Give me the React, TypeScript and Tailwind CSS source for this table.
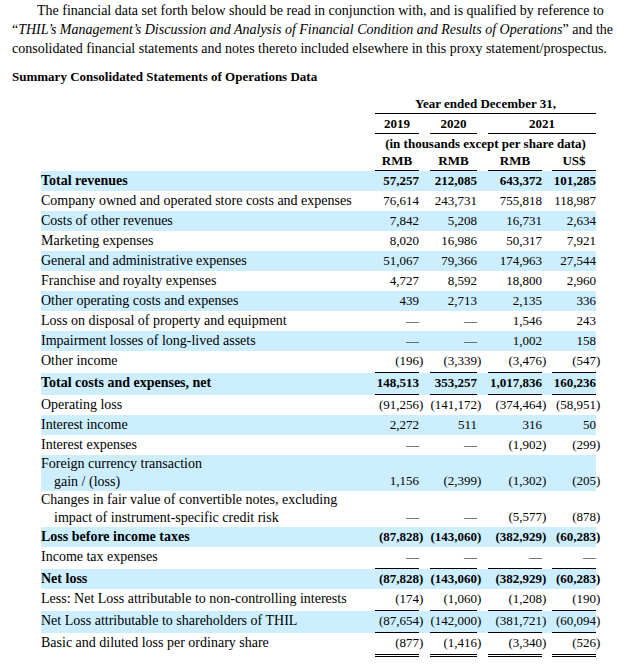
import React from "react";

type Row = {
  label: string;
  sub?: string;
  vals: string[];
  bold?: boolean;
  line?: "single" | "double";
};

const rows: Row[] = [
  { label: "Total revenues", vals: ["57,257", "212,085", "643,372", "101,285"], bold: true },
  { label: "Company owned and operated store costs and expenses", vals: ["76,614", "243,731", "755,818", "118,987"] },
  { label: "Costs of other revenues", vals: ["7,842", "5,208", "16,731", "2,634"] },
  { label: "Marketing expenses", vals: ["8,020", "16,986", "50,317", "7,921"] },
  { label: "General and administrative expenses", vals: ["51,067", "79,366", "174,963", "27,544"] },
  { label: "Franchise and royalty expenses", vals: ["4,727", "8,592", "18,800", "2,960"] },
  { label: "Other operating costs and expenses", vals: ["439", "2,713", "2,135", "336"] },
  { label: "Loss on disposal of property and equipment", vals: ["—", "—", "1,546", "243"] },
  { label: "Impairment losses of long-lived assets", vals: ["—", "—", "1,002", "158"] },
  { label: "Other income", vals: ["(196)", "(3,339)", "(3,476)", "(547)"], line: "single" },
  { label: "Total costs and expenses, net", vals: ["148,513", "353,257", "1,017,836", "160,236"], bold: true, line: "single" },
  { label: "Operating loss", vals: ["(91,256)", "(141,172)", "(374,464)", "(58,951)"] },
  { label: "Interest income", vals: ["2,272", "511", "316", "50"] },
  { label: "Interest expenses", vals: ["—", "—", "(1,902)", "(299)"] },
  { label: "Foreign currency transaction", sub: "gain / (loss)", vals: ["1,156", "(2,399)", "(1,302)", "(205)"] },
  {
    label: "Changes in fair value of convertible notes, excluding",
    sub: "impact of instrument-specific credit risk",
    vals: ["—", "—", "(5,577)", "(878)"],
  },
  { label: "Loss before income taxes", vals: ["(87,828)", "(143,060)", "(382,929)", "(60,283)"], bold: true },
  { label: "Income tax expenses", vals: ["—", "—", "—", "—"], line: "single" },
  { label: "Net loss", vals: ["(87,828)", "(143,060)", "(382,929)", "(60,283)"], bold: true },
  { label: "Less: Net Loss attributable to non-controlling interests", vals: ["(174)", "(1,060)", "(1,208)", "(190)"], line: "single" },
  { label: "Net Loss attributable to shareholders of THIL", vals: ["(87,654)", "(142,000)", "(381,721)", "(60,094)"], line: "single" },
  { label: "Basic and diluted loss per ordinary share", vals: ["(877)", "(1,416)", "(3,340)", "(526)"], line: "double" },
];

// value width + gap before each value column
const cols = [
  { w: "w-[44px]", pad: "" },
  { w: "w-[47px]", pad: "pl-[11px]" },
  { w: "w-[54px]", pad: "pl-[11px]" },
  { w: "w-[44px]", pad: "pl-[10px]" },
];

function Value({ v }: { v: string }) {
  // closing paren hangs past the column edge
  if (v.endsWith(")")) {
    return (
      <>
        {v.slice(0, -1)}
        <span className="inline-block w-0">)</span>
      </>
    );
  }
  return <>{v}</>;
}

function DataRow({ row, shaded }: { row: Row; shaded: boolean }) {
  const border =
    row.line === "single"
      ? "border-b border-black pb-[1px]"
      : row.line === "double"
        ? "border-b-[3px] border-double border-black pb-[1px]"
        : "";
  const lead = row.sub ? "leading-[18px]" : "leading-[20px]";
  return (
    <div className={`flex ${shaded ? "bg-[#cceeff]" : ""} ${row.bold ? "font-bold" : ""}`}>
      <div className={`w-[334px] text-[14px] ${lead} pr-2`}>
        <div>{row.label}</div>
        {row.sub && <div className="pl-[13px]">{row.sub}</div>}
      </div>
      {row.vals.map((v, i) => (
        <div key={i} className={`${cols[i].pad} flex items-end`}>
          <div className={`${cols[i].w} text-right text-[13px] leading-[20px] ${border}`}>
            <Value v={v} />
          </div>
        </div>
      ))}
    </div>
  );
}

export default function App() {
  return (
    <div className="bg-white text-black px-[12px] pt-[1px] pb-4 font-['Liberation_Serif',serif] w-[635px]">
      <p className="text-[14px] leading-[19px] whitespace-nowrap">
        <span className="pl-[25px]">
          The financial data set forth below should be read in conjunction with, and is qualified by reference to
        </span>
        <br />
        “<i>THIL’s Management’s Discussion and Analysis of Financial Condition and Results of Operations</i>” and the
        <br />
        consolidated financial statements and notes thereto included elsewhere in this proxy statement/prospectus.
      </p>
      <h2 className="mt-[9px] text-[13px] leading-[19px] font-bold">
        Summary Consolidated Statements of Operations Data
      </h2>

      <div className="mt-[9px] ml-[29px] w-[555px]">
        <div className="text-[13px] font-bold leading-[17px]">
          <div className="flex">
            <div className="w-[334px]" />
            <div className="w-[221px] text-center border-b border-black pb-[1px]">Year ended December 31,</div>
          </div>
          <div className="flex pt-[1px]">
            <div className="w-[334px]" />
            <div className="w-[44px] text-center border-b border-black pb-[1px]">2019</div>
            <div className="pl-[11px]">
              <div className="w-[47px] text-center border-b border-black pb-[1px]">2020</div>
            </div>
            <div className="pl-[11px]">
              <div className="w-[108px] text-center border-b border-black pb-[1px]">2021</div>
            </div>
          </div>
          <div className="flex pt-[1px]">
            <div className="w-[334px]" />
            <div className="w-[221px] text-center">(in thousands except per share data)</div>
          </div>
          <div className="flex">
            <div className="w-[334px]" />
            {["RMB", "RMB", "RMB", "US$"].map((h, i) => (
              <div key={i} className={cols[i].pad}>
                <div className={`${cols[i].w} text-center border-b border-black pb-[1px]`}>{h}</div>
              </div>
            ))}
          </div>
        </div>

        {rows.map((r, i) => (
          <DataRow key={i} row={r} shaded={i % 2 === 0} />
        ))}
      </div>
    </div>
  );
}
